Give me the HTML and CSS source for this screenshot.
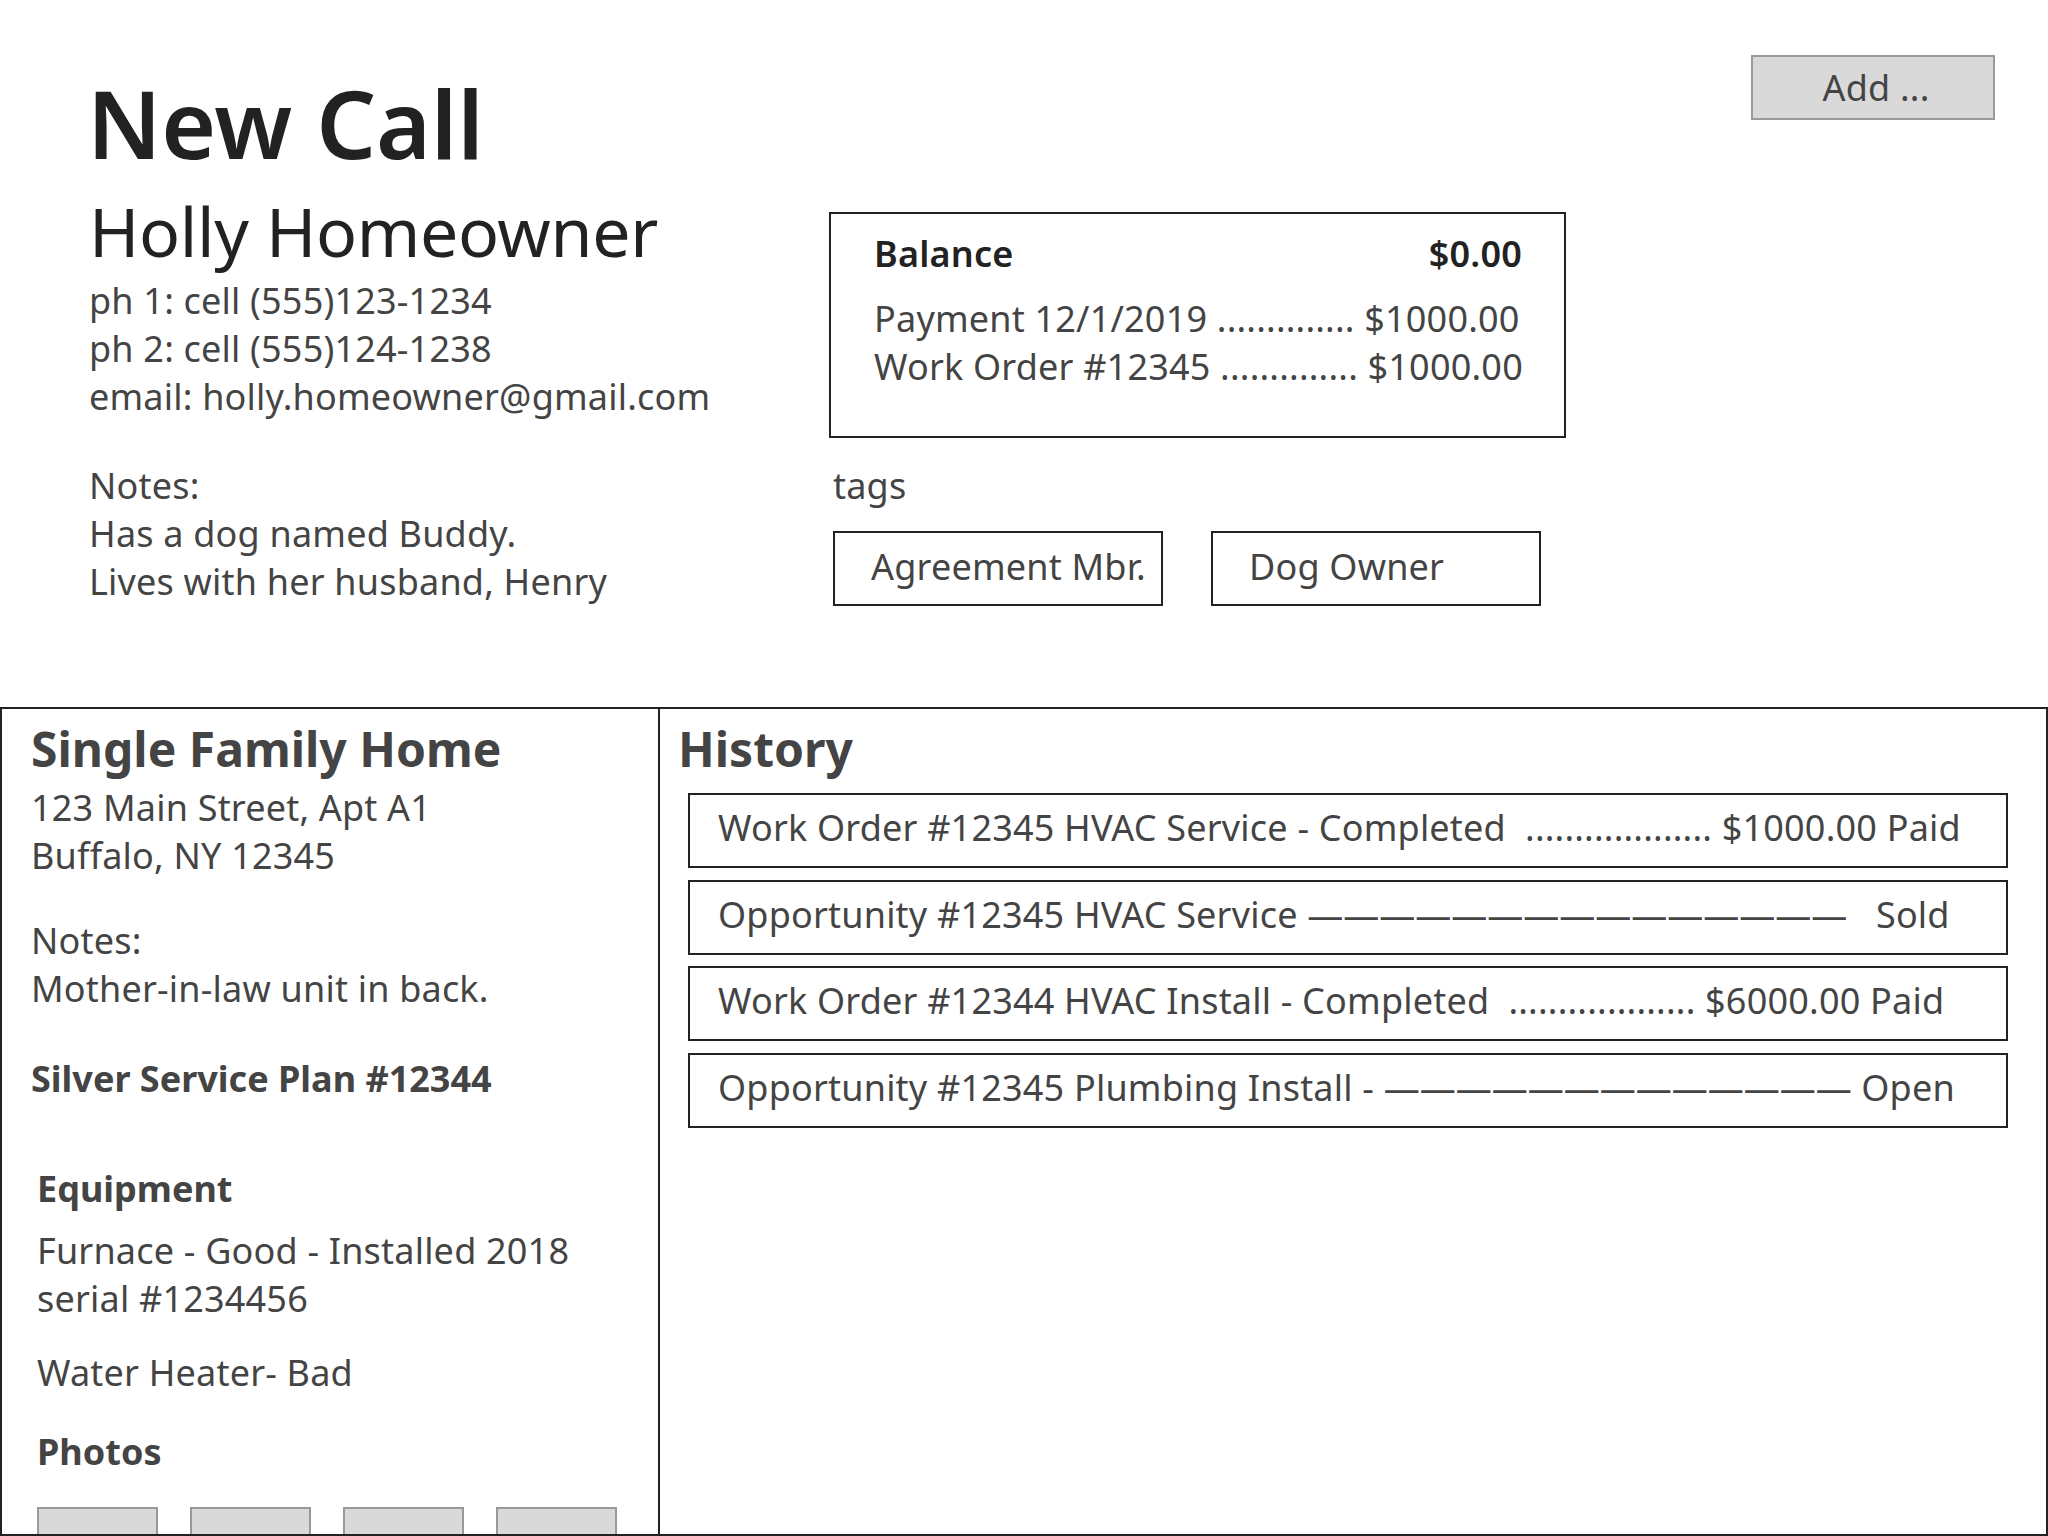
FILE: index.html
```html
<!DOCTYPE html>
<html lang="en">
<head>
<meta charset="utf-8">
<title>New Call</title>
<link rel="stylesheet" href="styles.css">
</head>
<body>
<div class="page">
  <div class="top">
    <header class="header">
      <h1 class="title">New Call</h1>
      <button class="add-btn" type="button">Add ...</button>
    </header>
    <section class="info">
      <div class="contact">
        <div class="name">Holly Homeowner</div>
        <div class="line">ph 1: cell (555)123-1234</div>
        <div class="line">ph 2: cell (555)124-1238</div>
        <div class="line">email: holly.homeowner@gmail.com</div>
      </div>
      <div class="balance">
        <div class="balance-head"><span>Balance</span><span>$0.00</span></div>
        <div class="balance-lines">
          <div class="line">Payment 12/1/2019 .............. $1000.00</div>
          <div class="line">Work Order #12345 .............. $1000.00</div>
        </div>
      </div>
      <div class="notes">
        <div class="line">Notes:</div>
        <div class="line">Has a dog named Buddy.</div>
        <div class="line">Lives with her husband, Henry</div>
      </div>
      <div class="tags">
        <div class="line">tags</div>
        <div class="tag-list">
          <div class="tag">Agreement Mbr.</div>
          <div class="tag">Dog Owner</div>
        </div>
      </div>
    </section>
  </div>
  <section class="detail">
    <div class="property">
      <h2 class="panel-title">Single Family Home</h2>
      <div class="block address">
        <div class="line">123 Main Street, Apt A1</div>
        <div class="line">Buffalo, NY 12345</div>
      </div>
      <div class="block prop-notes">
        <div class="line">Notes:</div>
        <div class="line">Mother-in-law unit in back.</div>
      </div>
      <div class="line bold plan">Silver Service Plan #12344</div>
      <div class="equipment">
        <div class="line bold eq-title">Equipment</div>
        <div class="block eq-item">
          <div class="line">Furnace - Good - Installed 2018</div>
          <div class="line">serial #1234456</div>
        </div>
        <div class="line eq-water">Water Heater- Bad</div>
        <div class="line bold photos-title">Photos</div>
        <div class="photos">
          <div class="photo"></div>
          <div class="photo"></div>
          <div class="photo"></div>
          <div class="photo"></div>
        </div>
      </div>
    </div>
    <div class="history">
      <h2 class="panel-title">History</h2>
      <div class="rows">
        <div class="row">Work Order #12345 HVAC Service - Completed  ................... $1000.00 Paid</div>
        <div class="row">Opportunity #12345 HVAC Service <span class="dashes">———————————————</span>   Sold</div>
        <div class="row">Work Order #12344 HVAC Install - Completed  ................... $6000.00 Paid</div>
        <div class="row">Opportunity #12345 Plumbing Install - <span class="dashes">—————————————</span> Open</div>
      </div>
    </div>
  </section>
</div>
</body>
</html>
```

FILE: styles.css
```css
html, body {
  margin: 0;
  padding: 0;
  height: 1536px;
  overflow: hidden;
  background: #ffffff;
}

body {
  font-family: "Noto Sans", "Open Sans", "Liberation Sans", sans-serif;
  font-size: 36px;
  color: #444444;
  letter-spacing: 0.2px;
}

.page {
  width: 2048px;
  height: 1536px;
  display: flex;
  flex-direction: column;
}

.line {
  line-height: 48px;
  white-space: pre;
}

.bold {
  font-weight: 700;
  letter-spacing: 0;
}

.top {
  padding: 55px 53px 0 89px;
}

.header {
  display: flex;
  justify-content: space-between;
  align-items: flex-start;
}

.title {
  margin: 11.5px 0 0 -2px;
  font-size: 94px;
  line-height: 112px;
  font-weight: 600;
  letter-spacing: -0.2px;
  color: #222222;
}

.add-btn {
  width: 244px;
  height: 65px;
  margin: 0;
  padding: 0 0 0 6px;
  background: #d9d9d9;
  border: 2px solid #999999;
  font-family: inherit;
  font-size: 36px;
  letter-spacing: 0.2px;
  line-height: 61px;
  color: #444444;
}

.info {
  margin-top: 12px;
  display: grid;
  grid-template-columns: 740px 737px;
  row-gap: 24px;
}

.name {
  font-size: 68px;
  line-height: 80px;
  letter-spacing: -0.35px;
  color: #222222;
  margin-bottom: 6px;
}

.balance {
  align-self: start;
  margin-top: 21.4px;
  height: 226px;
  box-sizing: border-box;
  border: 2px solid #222222;
  padding: 16px 42px 0 43px;
}

.balance-head {
  display: flex;
  justify-content: space-between;
  line-height: 48px;
  font-weight: 600;
  color: #222222;
}

.balance-lines {
  margin-top: 17px;
}

.tags {
  padding-left: 4px;
}

.tag-list {
  margin-top: 21px;
  display: flex;
  gap: 48px;
}

.tag {
  width: 330px;
  height: 75px;
  box-sizing: border-box;
  border: 2px solid #222222;
  padding: 10px 0 0 36px;
  line-height: 48px;
  white-space: nowrap;
}

.detail {
  margin-top: 101px;
  flex: 1;
  min-height: 0;
  box-sizing: border-box;
  border: 2px solid #222222;
  display: grid;
  grid-template-columns: 658px 1fr;
  overflow: hidden;
}

.property {
  border-right: 2px solid #222222;
  padding: 8px 0 0 29px;
  overflow: hidden;
}

.panel-title {
  margin: 0;
  font-size: 48px;
  line-height: 64px;
  font-weight: 700;
  letter-spacing: 0;
  color: #444444;
}

.address {
  margin-top: 3px;
}

.prop-notes {
  margin-top: 37px;
}

.plan {
  margin-top: 42px;
}

.equipment {
  padding-left: 6px;
}

.eq-title {
  margin-top: 62px;
}

.eq-item {
  margin-top: 14px;
}

.eq-water {
  margin-top: 26px;
}

.photos-title {
  margin-top: 31px;
}

.photos {
  margin-top: 31px;
  display: flex;
  gap: 32px;
}

.photo {
  width: 121px;
  height: 60px;
  flex: none;
  box-sizing: border-box;
  background: #d9d9d9;
  border: 2px solid #999999;
}

.history {
  padding: 8px 38px 0 18px;
}

.rows {
  margin-top: 12.6px;
  margin-left: 10px;
  display: flex;
  flex-direction: column;
  gap: 11.5px;
}

.row {
  height: 75px;
  box-sizing: border-box;
  border: 2px solid #222222;
  padding: 9px 0 0 28px;
  line-height: 48px;
  white-space: pre;
}

.dashes {
  letter-spacing: 0;
}
```
